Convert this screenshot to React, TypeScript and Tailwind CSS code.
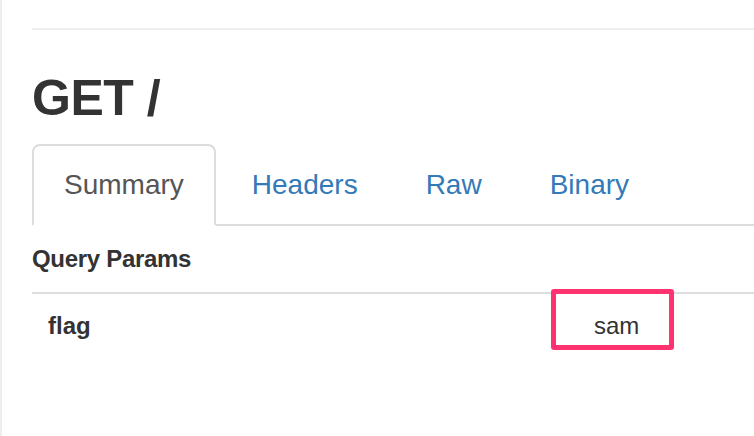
import React from "react";

const tabs = ["Summary", "Headers", "Raw", "Binary"];

const Tabs = ({ active }: { active: string }) => (
    <ul className="mt-[18px] flex border-b-2 border-[#ddd]">
        {tabs.map((t) => (
            <li key={t} className="-mb-[2px] mr-[4px]">
                <a
                    href="#"
                    className={
                        t === active
                            ? "block rounded-t-[8px] border-2 border-[#ddd] border-b-white bg-white px-[30px] py-[19px] text-[28px] leading-[40px] text-[#555]"
                            : "block rounded-t-[8px] border-2 border-transparent px-[30px] py-[19px] text-[28px] leading-[40px] text-[#337ab7]"
                    }
                >
                    {t}
                </a>
            </li>
        ))}
    </ul>
);

const ParamRow = ({ name, value }: { name: string; value: string }) => (
    <div className="flex border-t-2 border-[#ddd] pt-[15px] text-[24px] leading-[34px] text-[#333]">
        <div className="w-[562px] shrink-0 pl-[16px] font-bold">{name}</div>
        <div className="relative">
            {/* highlight box drawn over the value */}
            <div className="absolute -left-[43px] -top-[20px] h-[61px] w-[123px] rounded-[3px] border-[5px] border-[#ff3370]" />
            <span className="relative">{value}</span>
        </div>
    </div>
);

export default function App() {
    return (
        <div
            className="min-h-screen overflow-hidden border-l-2 border-[#eee] bg-white pl-[30px]"
            style={{ fontFamily: '"Liberation Sans", Arial, sans-serif' }}
        >
            <div className="mt-[28px] h-[2px] bg-[#eee]" />
            <h1 className="mt-[40px] text-[50px] font-bold leading-[56px] tracking-[-0.5px] text-[#333]">
                GET /
            </h1>
            <Tabs active="Summary" />
            <h4 className="mt-[20px] text-[24px] font-bold leading-[26px] tracking-[-0.3px] text-[#333]">
                Query Params
            </h4>
            <div className="mt-[20px]">
                <ParamRow name="flag" value="sam" />
            </div>
        </div>
    );
}
